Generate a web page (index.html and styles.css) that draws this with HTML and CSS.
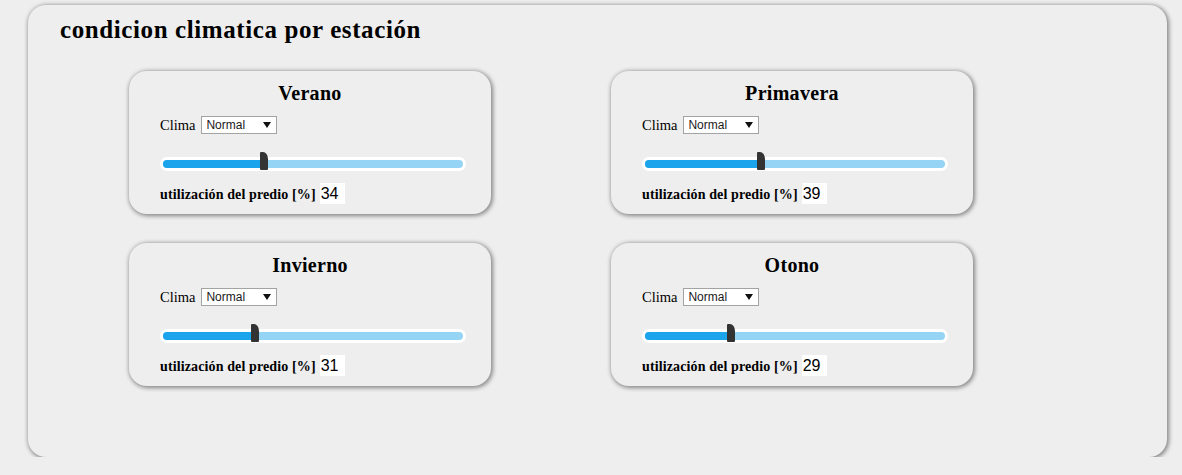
FILE: index.html
```html
<!DOCTYPE html>
<html lang="es">
<head>
<meta charset="utf-8">
<title>condicion climatica por estación</title>
<link rel="stylesheet" href="styles.css">
</head>
<body>
<div class="panel">
  <h1 class="panel-title">condicion climatica por estación</h1>
  <div class="cards">
    <div class="card">
      <h3 class="card-title">Verano</h3>
      <div class="clima-row"><span class="clima-label">Clima</span><div class="select"><span>Normal</span><i class="arrow"></i></div></div>
      <div class="slider"><div class="track"><div class="fill" style="width:34%"></div></div><div class="thumb" style="left:calc(34% - 4px)"></div></div>
      <div class="value-row"><span class="value-label">utilización del predio [%]</span><span class="value">34</span></div>
    </div>
    <div class="card">
      <h3 class="card-title">Primavera</h3>
      <div class="clima-row"><span class="clima-label">Clima</span><div class="select"><span>Normal</span><i class="arrow"></i></div></div>
      <div class="slider"><div class="track"><div class="fill" style="width:39%"></div></div><div class="thumb" style="left:calc(39% - 4px)"></div></div>
      <div class="value-row"><span class="value-label">utilización del predio [%]</span><span class="value">39</span></div>
    </div>
    <div class="card">
      <h3 class="card-title">Invierno</h3>
      <div class="clima-row"><span class="clima-label">Clima</span><div class="select"><span>Normal</span><i class="arrow"></i></div></div>
      <div class="slider"><div class="track"><div class="fill" style="width:31%"></div></div><div class="thumb" style="left:calc(31% - 4px)"></div></div>
      <div class="value-row"><span class="value-label">utilización del predio [%]</span><span class="value">31</span></div>
    </div>
    <div class="card">
      <h3 class="card-title">Otono</h3>
      <div class="clima-row"><span class="clima-label">Clima</span><div class="select"><span>Normal</span><i class="arrow"></i></div></div>
      <div class="slider"><div class="track"><div class="fill" style="width:29%"></div></div><div class="thumb" style="left:calc(29% - 4px)"></div></div>
      <div class="value-row"><span class="value-label">utilización del predio [%]</span><span class="value">29</span></div>
    </div>
  </div>
</div>
</body>
</html>
```
FILE: styles.css
```css
html, body {
  margin: 0;
  padding: 0;
  background: #eeeeee;
}
body {
  font-family: "Liberation Serif", "Times New Roman", serif;
  color: #000;
  padding-top: 5px;
}
.panel {
  box-sizing: border-box;
  margin: 0 15px 0 28px;
  height: 452px;
  border-radius: 18px;
  background: #eeeeee;
  box-shadow: 1px 1px 4px 1px #858585;
  padding: 11px 0 0 32px;
}
.panel-title {
  margin: 0;
  font-size: 25px;
  line-height: 28px;
  font-weight: bold;
  letter-spacing: 0.6px;
}
.cards {
  margin: 27px 0 0 69px;
  display: grid;
  grid-template-columns: 362px 362px;
  column-gap: 120px;
  row-gap: 29px;
}
.card {
  box-sizing: border-box;
  height: 143px;
  border-radius: 18px;
  background: #eeeeee;
  box-shadow: 1px 1px 4px 1px #878787;
  padding: 11px 0 10px 0;
  display: flex;
  flex-direction: column;
}
.card-title {
  margin: 0;
  text-align: center;
  font-size: 20px;
  line-height: 22px;
  font-weight: bold;
  letter-spacing: 0.3px;
}
.clima-row {
  margin: 12px 25px 0 31px;
  height: 18px;
  display: flex;
  align-items: center;
  gap: 6px;
}
.clima-label {
  font-size: 14.5px;
  line-height: 18px;
}
.select {
  box-sizing: border-box;
  width: 76px;
  height: 18px;
  border: 1px solid #a3a3a3;
  background: #fff;
  display: flex;
  align-items: center;
  justify-content: space-between;
  padding: 0 5px 0 4px;
  font-family: "Liberation Sans", Arial, sans-serif;
  font-size: 12px;
  color: #1a1a1a;
}
.arrow {
  width: 0;
  height: 0;
  border-left: 4px solid transparent;
  border-right: 4px solid transparent;
  border-top: 6px solid #111;
}
.slider {
  position: relative;
  margin: 18px 25px 0 31px;
  height: 19px;
  display: flex;
  align-items: flex-end;
}
.track {
  box-sizing: border-box;
  flex: 1;
  height: 14px;
  border: 3px solid #fff;
  border-radius: 7px;
  background: #96d4f6;
  display: flex;
  overflow: hidden;
}
.fill {
  height: 100%;
  background: #1ba3ec;
}
.thumb {
  position: absolute;
  top: 0;
  width: 8px;
  height: 18px;
  background: #333;
  border-radius: 1px 5px 1px 1px / 1px 7px 1px 1px;
}
.value-row {
  margin: 12px 25px 0 31px;
  height: 21px;
  display: flex;
  align-items: baseline;
  gap: 4px;
}
.value-label {
  font-size: 14px;
  font-weight: bold;
  letter-spacing: 0.12px;
}
.value {
  box-sizing: border-box;
  width: 25px;
  height: 21px;
  line-height: 21px;
  background: #fff;
  padding-left: 1px;
  font-family: "Liberation Sans", Arial, sans-serif;
  font-size: 16px;
}
```
